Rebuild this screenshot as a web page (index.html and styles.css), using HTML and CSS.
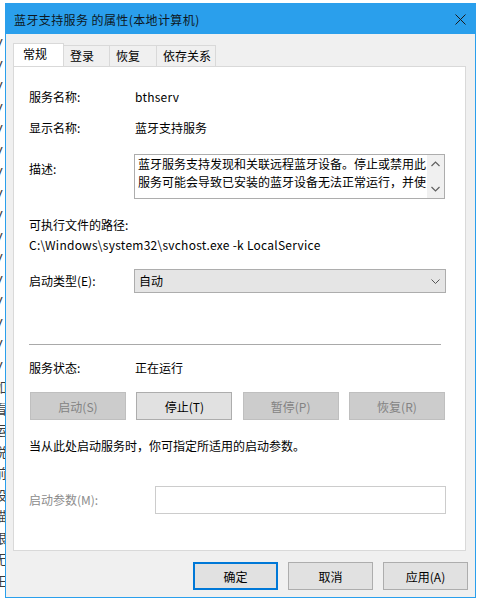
FILE: index.html
```html
<!DOCTYPE html>
<html>
<head>
    <title>蓝牙支持服务 的属性(本地计算机)</title>
    <link rel="stylesheet" href="styles.css">
</head>
<body>
    <div class="desktop">
        <!-- list behind the dialog, only a sliver shows -->
        <div class="behind">
            <span>V</span><span>V</span><span>V</span><span>V</span><span>V</span>
            <span>V</span><span>V</span><span>V</span><span>V</span><span>V</span>
            <span>V</span><span>V</span><span>V</span><span>V</span><span>V</span>
            <span>V</span><span>如</span><span>看</span><span>运</span><span>说</span>
            <span>前</span><span>设</span><span>描</span><span>限</span><span>无</span>
            <span>王</span>
        </div>

        <div class="window">
            <div class="titlebar">
                <span class="title">蓝牙支持服务 的属性(本地计算机)</span>
                <svg class="close" width="11" height="11" viewBox="0 0 11 11">
                    <path d="M0.5 0.5 L10.5 10.5 M10.5 0.5 L0.5 10.5" stroke="#1b1b1b" stroke-width="1" fill="none"/>
                </svg>
            </div>

            <div class="dialog-body">
                <div class="tabs">
                    <div class="tab active">常规</div>
                    <div class="tab tab-login">登录</div>
                    <div class="tab tab-recover">恢复</div>
                    <div class="tab tab-deps">依存关系</div>
                </div>

                <div class="panel">
                    <div class="field row-name">
                        <span class="label">服务名称:</span>
                        <span class="value latin">bthserv</span>
                    </div>
                    <div class="field row-display">
                        <span class="label">显示名称:</span>
                        <span class="value">蓝牙支持服务</span>
                    </div>
                    <div class="field row-desc">
                        <span class="label label-desc">描述:</span>
                        <div class="textbox">
                            <div class="textbox-text">蓝牙服务支持发现和关联远程蓝牙设备。停止或禁用此<br>服务可能会导致已安装的蓝牙设备无法正常运行，并使</div>
                            <div class="scrollbar">
                                <svg width="9" height="6" viewBox="0 0 9 6"><path d="M0.5 5 L4.5 1 L8.5 5" stroke="#606060" stroke-width="1.2" fill="none"/></svg>
                                <svg width="9" height="6" viewBox="0 0 9 6"><path d="M0.5 1 L4.5 5 L8.5 1" stroke="#606060" stroke-width="1.2" fill="none"/></svg>
                            </div>
                        </div>
                    </div>
                    <div class="path-label">可执行文件的路径:</div>
                    <div class="path latin">C:\Windows\system32\svchost.exe -k LocalService</div>
                    <div class="field row-startup">
                        <span class="label">启动类型(E):</span>
                        <div class="combobox">
                            <span>自动</span>
                            <svg width="9" height="5" viewBox="0 0 9 5"><path d="M0.5 0.5 L4.5 4.5 L8.5 0.5" stroke="#555" stroke-width="1" fill="none"/></svg>
                        </div>
                    </div>

                    <div class="separator"></div>

                    <div class="field row-status">
                        <span class="label">服务状态:</span>
                        <span class="value">正在运行</span>
                    </div>
                    <div class="service-buttons">
                        <button class="btn" disabled>启动(S)</button>
                        <button class="btn">停止(T)</button>
                        <button class="btn" disabled>暂停(P)</button>
                        <button class="btn" disabled>恢复(R)</button>
                    </div>
                    <div class="hint">当从此处启动服务时，你可指定所适用的启动参数。</div>
                    <div class="field row-params">
                        <span class="label label-params">启动参数(M):</span>
                        <div class="param-input"></div>
                    </div>
                </div>

                <div class="footer">
                    <button class="btn footer-btn default">确定</button>
                    <button class="btn footer-btn">取消</button>
                    <button class="btn footer-btn">应用(A)</button>
                </div>
            </div>
        </div>
    </div>
</body>
</html>
```

FILE: styles.css
```css
/* Service properties dialog */
* {
    box-sizing: border-box;
}

body {
    margin: 0;
    width: 479px;
    height: 602px;
    overflow: hidden;
    background: #fff;
    font-family: "Noto Sans CJK SC", "Microsoft YaHei", sans-serif;
    font-size: 12px;
    color: #000;
}

.desktop {
    display: flex;
    height: 602px;
}

.behind {
    width: 5px;
    flex: none;
    overflow: hidden;
    padding-top: 33px;
    font-family: "Liberation Sans", "Noto Sans CJK SC", sans-serif;
    font-size: 13px;
    line-height: 21.5px;
    color: #3a3a3a;
    white-space: nowrap;
}

.behind span {
    display: block;
    margin-left: -6px;
}

.window {
    width: 471px;
    height: 595px;
    margin-top: 3px;
    border: 1px solid #2a9fec;
    background: #f0f0f0;
    display: flex;
    flex-direction: column;
}

.titlebar {
    height: 30px;
    flex: none;
    background: #2a9fec;
    display: flex;
    align-items: center;
    justify-content: space-between;
    padding: 1px 9px 0 8px;
}

.title {
    font-size: 12px;
    color: #0d1722;
    letter-spacing: 0.4px;
}

.dialog-body {
    flex: 1;
    display: flex;
    flex-direction: column;
    padding: 9px 9px 7px 7px;
}

/* Tabs */
.tabs {
    display: flex;
    align-items: flex-end;
    height: 24px;
    margin-bottom: -1px;
}

.tab {
    height: 22px;
    line-height: 20px;
    padding-left: 6px;
    background: #f0f0f0;
    border: 1px solid #d9d9d9;
    border-left: none;
}

.tab.active {
    width: 51px;
    height: 24px;
    line-height: 20px;
    padding-left: 9px;
    background: #fff;
    border-left: 1px solid #d9d9d9;
    border-bottom: none;
}

.tab-login { width: 46px; }
.tab-recover { width: 47px; }
.tab-deps { width: 59px; }

.panel {
    height: 485px;
    background: #fff;
    border: 1px solid #d9d9d9;
    padding: 0 0 0 15px;
}

.field {
    display: flex;
    line-height: 16px;
}

.label {
    width: 106px;
    flex: none;
}

.latin {
    letter-spacing: 0.25px;
}

.row-name { margin-top: 22px; }
.row-display { margin-top: 15px; }

.row-desc {
    margin-top: 18px;
}

.label-desc {
    padding-top: 7px;
}

.textbox {
    width: 311px;
    height: 45px;
    margin-left: -1px;
    border: 1px solid #adadad;
    display: flex;
}

.textbox-text {
    flex: 1;
    padding: 0 0 0 3px;
    line-height: 18px;
    white-space: nowrap;
    overflow: hidden;
}

.scrollbar {
    width: 17px;
    flex: none;
    background: #f0f0f0;
    display: flex;
    flex-direction: column;
    justify-content: space-between;
    align-items: center;
    padding: 6px 0 6px;
}

.path-label {
    margin-top: 18px;
    line-height: 16px;
}

.path {
    margin-top: 4px;
    line-height: 16px;
}

.row-startup {
    margin-top: 16px;
    line-height: 24px;
}

.combobox {
    width: 312px;
    height: 24px;
    margin-left: -1px;
    background: #e5e5e5;
    border: 1px solid #adadad;
    display: flex;
    align-items: center;
    justify-content: space-between;
    padding: 0 5px 0 4px;
    line-height: 22px;
}

.separator {
    width: 412px;
    margin-top: 51px;
    border-top: 1px solid #a9a9a9;
}

.row-status {
    margin-top: 15px;
}

.service-buttons {
    width: 415px;
    margin: 16px 0 0 1px;
    display: flex;
    justify-content: space-between;
}

.btn {
    width: 96px;
    height: 28px;
    font-family: inherit;
    font-size: 12px;
    color: #000;
    background: #e1e1e1;
    border: 1px solid #adadad;
    padding: 0;
}

.btn:disabled {
    background: #cccccc;
    border-color: #bfbfbf;
    color: #838383;
}

.hint {
    margin-top: 18px;
    line-height: 16px;
}

.row-params {
    margin-top: 32px;
    line-height: 28px;
}

.label-params {
    width: 126px;
    color: #8c8c8c;
}

.param-input {
    width: 291px;
    height: 28px;
    background: #fff;
    border: 1px solid #cccccc;
}

/* Bottom buttons */
.footer {
    display: flex;
    justify-content: flex-end;
    gap: 10px;
    margin: 11px -2px 0 0;
}

.footer-btn {
    width: 85px;
}

.footer-btn.default {
    border: 2px solid #0078d7;
}
```
